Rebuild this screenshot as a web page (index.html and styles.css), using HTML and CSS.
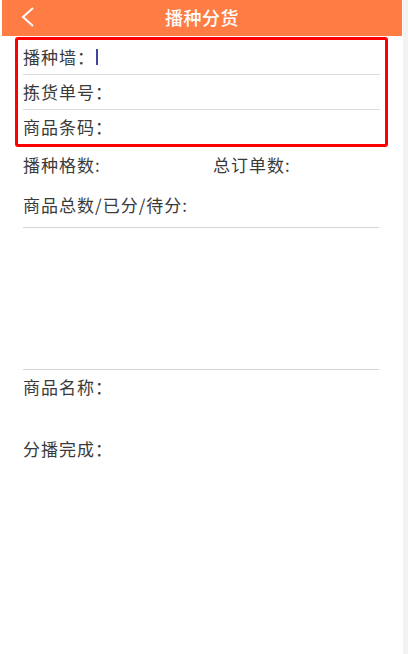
FILE: index.html
```html
<!DOCTYPE html>
<html lang="zh-CN">
<head>
<meta charset="utf-8">
<title>播种分货</title>
<link rel="stylesheet" href="styles.css">
</head>
<body>
<div class="page">
  <main class="main">
    <header class="topbar">
      <span class="back">
        <svg width="14" height="20" viewBox="0 0 14 20"><path d="M12 1 L2 10 L12 19" fill="none" stroke="#fff" stroke-width="2"/></svg>
      </span>
      <h1 class="title">播种分货</h1>
    </header>

    <section class="scanbox">
      <div class="row">播种墙：<span class="cursor"></span></div>
      <div class="sep"></div>
      <div class="row">拣货单号：</div>
      <div class="sep"></div>
      <div class="row">商品条码：</div>
    </section>

    <section class="info">
      <div class="inforow two">
        <span class="col">播种格数:</span>
        <span class="col">总订单数:</span>
      </div>
      <div class="inforow">商品总数/已分/待分:</div>
      <div class="line"></div>
      <div class="blank"></div>
      <div class="line"></div>
      <div class="inforow name">商品名称：</div>
      <div class="inforow done">分播完成：</div>
    </section>
  </main>
  <div class="scrollbar"></div>
</div>
</body>
</html>
```

FILE: styles.css
```css
html, body {
  margin: 0;
  padding: 0;
  background: #ffffff;
}
body {
  font-family: "Noto Sans CJK SC", "Noto Sans", sans-serif;
  color: #3a3a3a;
}
.page {
  display: flex;
  height: 654px;
  padding-left: 2px;
}
.main {
  width: 400px;
  display: flex;
  flex-direction: column;
}
.scrollbar {
  width: 5px;
  margin-left: 1px;
  background: #f3f3f3;
}
.topbar {
  height: 36px;
  background: #ff7c44;
  display: flex;
  align-items: center;
  justify-content: center;
  position: relative;
}
.back {
  position: absolute;
  left: 19px;
  top: 7px;
  display: block;
}
.back svg { display: block; }
.title {
  margin: 0 0 2px 0;
  font-size: 18px;
  font-weight: 500;
  color: #ffffff;
  letter-spacing: 0.5px;
}
.scanbox {
  margin: 1px 0 0 13px;
  border: 3px solid #ff0000;
  border-radius: 3px;
  padding: 0 5px;
  box-sizing: content-box;
  width: 357px;
}
.row {
  height: 34px;
  display: flex;
  align-items: center;
  font-size: 17px;
  letter-spacing: 1px;
  padding-bottom: 1px;
  box-sizing: border-box;
}
.cursor {
  display: inline-block;
  width: 2px;
  height: 16px;
  background: #44449a;
  margin-left: 1px;
}
.sep {
  height: 1px;
  background: #dcdcdc;
}
.info {
  padding: 0 23px 0 21px;
}
.inforow {
  height: 40px;
  display: flex;
  align-items: center;
  font-size: 17px;
  letter-spacing: 1px;
  padding-bottom: 5px;
  box-sizing: border-box;
}
.inforow.two .col:first-child {
  width: 190px;
}
.line {
  height: 1px;
  background: #d6d6d6;
}
.blank {
  height: 141px;
}
.inforow.name {
  height: 38px;
}
.inforow.done {
  height: 86px;
}
```
